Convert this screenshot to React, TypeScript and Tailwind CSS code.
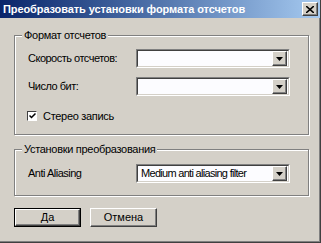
import React from 'react'

const raised =
  'border border-t-white border-l-white border-r-[#404040] border-b-[#404040] shadow-[inset_-1px_-1px_0_#808080]'

function DropArrow() {
  return (
    <div className={`flex h-[15px] w-[15px] items-center justify-center bg-[#d4d0c8] ${raised}`}>
      <svg width="7" height="4" viewBox="0 0 7 4">
        <path d="M0 0h7L3.5 4z" fill="#000" />
      </svg>
    </div>
  )
}

function Combo({ value }: { value?: string }) {
  return (
    <div className="flex h-[19px] w-[154px] border border-t-[#808080] border-l-[#808080] border-r-white border-b-white">
      <div className="flex flex-1 items-center border border-t-[#404040] border-l-[#404040] border-r-[#d4d0c8] border-b-[#d4d0c8] bg-[#fcfcff] pr-px">
        <span className="flex-1 pl-[3px] text-[11px] leading-none tracking-[-0.7px] text-black">{value}</span>
        <DropArrow />
      </div>
    </div>
  )
}

function Group({ title, className, children }: { title: string; className?: string; children: React.ReactNode }) {
  return (
    <fieldset
      className={`w-[295px] border border-[#808080] px-[13px] shadow-[1px_1px_0_#fff,inset_1px_1px_0_#fff] ${className ?? ''}`}
    >
      <legend className="ml-[-6px] bg-[#d4d0c8] px-[2px] text-[11px] leading-[13px] tracking-[-0.3px] text-black">
        {title}
      </legend>
      {children}
    </fieldset>
  )
}

export default function App() {
  return (
    <div
      className="flex h-[243px] w-[321px] flex-col border-b border-r border-[#404040] bg-[#d4d0c8] shadow-[inset_-1px_-1px_0_#808080]"
      style={{ fontFamily: '"Liberation Sans", Arial, sans-serif' }}
    >
      <div className="flex h-[18px] shrink-0 items-center justify-between bg-gradient-to-r from-[#0a246a] to-[#a6caf0] pl-[3px] pr-[2px]">
        <span className="text-[11px] font-bold leading-none tracking-[-0.1px] text-white">
          Преобразовать установки формата отсчетов
        </span>
        <button
          type="button"
          className={`flex h-[14px] w-[16px] items-center justify-center bg-[#d4d0c8] ${raised}`}
        >
          <svg width="8" height="7" viewBox="0 0 8 7">
            <path d="M0 0l8 7M8 0L0 7" stroke="#000" strokeWidth="1.6" />
          </svg>
        </button>
      </div>

      <div className="flex flex-col pl-[14px]">
        <Group title="Формат отсчетов" className="mt-[11px] pb-[13px]">
          <div className="mt-[7px] flex items-center">
            <span className="w-[108px] text-[11px] tracking-[-0.5px] text-black">Скорость отсчетов:</span>
            <Combo />
          </div>
          <div className="mt-[9px] flex items-center">
            <span className="w-[108px] text-[11px] tracking-[-0.5px] text-black">Число бит:</span>
            <Combo />
          </div>
          <div className="mt-[15px] flex h-[10px] items-center">
            <div className="ml-[-1px] flex h-[10px] w-[10px] items-center justify-center border border-t-[#404040] border-l-[#404040] border-r-white border-b-white bg-white">
              <svg width="7" height="6" viewBox="0 0 7 6">
                <path d="M0.5 2.5l2 2 4-4" stroke="#000" strokeWidth="1.5" fill="none" />
              </svg>
            </div>
            <span className="ml-[6px] text-[11px] tracking-[-0.3px] text-black">Стерео запись</span>
          </div>
        </Group>

        <Group title="Установки преобразования" className="mt-[8px] pb-[12px]">
          <div className="mt-[8px] flex items-center">
            <span className="w-[108px] text-[11px] tracking-[-0.5px] text-black">Anti Aliasing</span>
            <Combo value="Medium anti aliasing filter" />
          </div>
        </Group>

        <div className="mt-[12px] flex gap-[9px]">
          <button type="button" className="h-[19px] w-[67px] border border-black bg-[#d4d0c8] p-0">
            <div className={`flex h-full w-full items-center justify-center ${raised} text-[11px] text-black`}>Да</div>
          </button>
          <button
            type="button"
            className={`flex h-[19px] w-[67px] items-center justify-center bg-[#d4d0c8] ${raised} text-[11px] text-black`}
          >
            Отмена
          </button>
        </div>
      </div>
    </div>
  )
}
